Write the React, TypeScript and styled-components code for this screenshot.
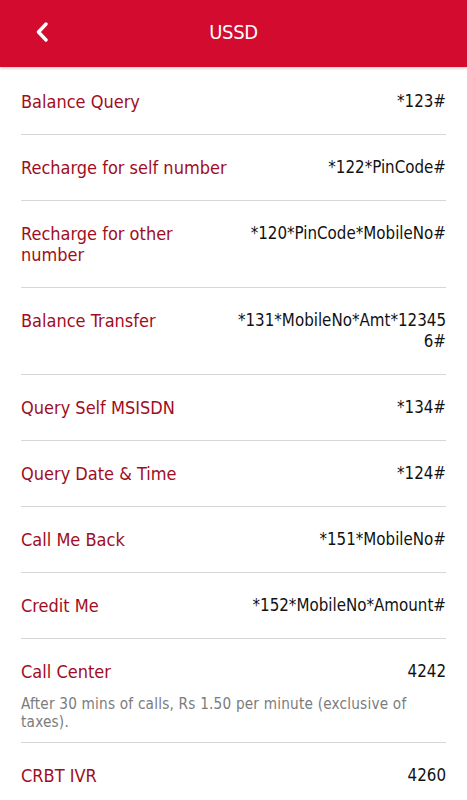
import React from "react";
import styled, { createGlobalStyle } from "styled-components";

type Code = {
  label: string;
  code: string;
  note?: string;
};

const codes: Code[] = [
  { label: "Balance Query", code: "*123#" },
  { label: "Recharge for self number", code: "*122*PinCode#" },
  { label: "Recharge for other number", code: "*120*PinCode*MobileNo#" },
  { label: "Balance Transfer", code: "*131*MobileNo*Amt*123456#" },
  { label: "Query Self MSISDN", code: "*134#" },
  { label: "Query Date & Time", code: "*124#" },
  { label: "Call Me Back", code: "*151*MobileNo#" },
  { label: "Credit Me", code: "*152*MobileNo*Amount#" },
  {
    label: "Call Center",
    code: "4242",
    note: "After 30 mins of calls, Rs 1.50 per minute (exclusive of taxes).",
  },
  { label: "CRBT IVR", code: "4260" },
];

const GlobalStyle = createGlobalStyle`
  html, body {
    margin: 0;
    padding: 0;
    background: #ffffff;
  }
  body {
    font-family: "DejaVu Sans Condensed", "DejaVu Sans", sans-serif;
    font-stretch: condensed;
  }
`;

const Page = styled.div`
  width: 467px;
  height: 800px;
  overflow: hidden;
  background: #fff;
`;

const Header = styled.header`
  position: relative;
  z-index: 1;
  height: 67px;
  box-sizing: border-box;
  padding-bottom: 3px;
  background: #d20b2f;
  box-shadow: 0 1px 3px rgba(0, 0, 0, 0.25);
  display: flex;
  align-items: center;
  justify-content: center;
`;

const BackButton = styled.button`
  position: absolute;
  left: 28px;
  top: 16px;
  width: 28px;
  height: 32px;
  padding: 0;
  border: none;
  background: transparent;
  display: flex;
  align-items: center;
  justify-content: center;
  cursor: pointer;
`;

const Title = styled.h1`
  margin: 0;
  color: #fff;
  font-size: 20px;
  font-weight: normal;
  letter-spacing: -0.3px;
`;

const List = styled.ul`
  list-style: none;
  margin: 0;
  padding: 2px 21px 0;
`;

const Item = styled.li<{ $hasNote?: boolean }>`
  padding: 22px 0 ${(p) => (p.$hasNote ? "11px" : "22px")};
  border-bottom: 1px solid #d6d6d6;
`;

const Row = styled.div`
  display: flex;
  justify-content: space-between;
  line-height: 21px;
`;

const Label = styled.span`
  width: 50%;
  color: #a00d22;
  font-size: 18px;
`;

const Value = styled.span`
  width: 50%;
  color: #111;
  font-size: 16.8px;
  text-align: right;
  word-break: break-all;
`;

const Note = styled.p`
  margin: 13px 0 0;
  color: #7c7c7c;
  font-size: 15.2px;
  line-height: 18px;
  padding-right: 20px;
  letter-spacing: 0.2px;
`;

const App = () => {
  return (
    <Page>
      <GlobalStyle />
      <Header>
        <BackButton aria-label="back">
          <svg width="14" height="20" viewBox="0 0 14 20">
            <path
              d="M11 2 L3.5 10 L11 18"
              fill="none"
              stroke="#fff"
              strokeWidth="3.4"
              strokeLinecap="round"
              strokeLinejoin="round"
            />
          </svg>
        </BackButton>
        <Title>USSD</Title>
      </Header>

      <List>
        {codes.map((c) => (
          <Item key={c.label} $hasNote={!!c.note}>
            <Row>
              <Label>{c.label}</Label>
              <Value>{c.code}</Value>
            </Row>
            {c.note && <Note>{c.note}</Note>}
          </Item>
        ))}
      </List>
    </Page>
  );
};

export default App;
